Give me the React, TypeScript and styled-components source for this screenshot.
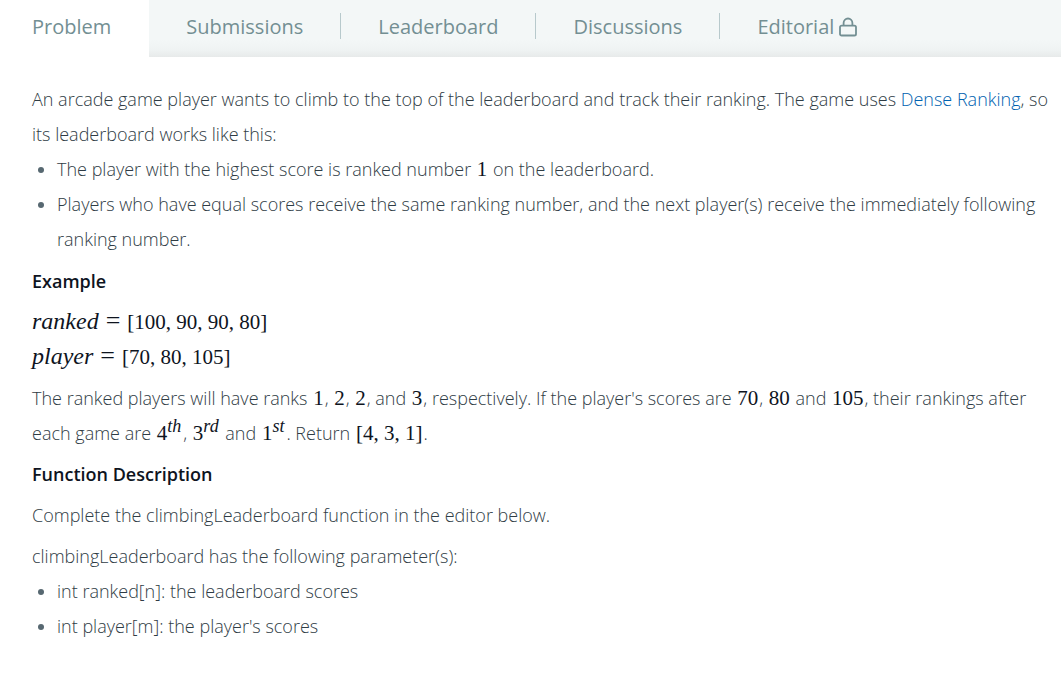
import React from "react";
import styled, { createGlobalStyle } from "styled-components";

const Global = createGlobalStyle`
  * { box-sizing: border-box; }
  body { margin: 0; background: #fff; color: #2f3c45; font-family: "Open Sans", sans-serif; font-size: 18px; font-weight: 300; line-height: 35px; }
`;
const Tabs = styled.nav`
  display: flex;
  height: 57px;
  background: linear-gradient(to bottom, #f3f7f7 40px, #eff3f3 50px, #e7eaea 57px);
`;
const Tab = styled.a<{ $active?: boolean }>`
  display: flex;
  align-items: center;
  gap: 5px;
  padding: 0 37px 4px;
  font-size: 20px;
  font-weight: 400;
  color: #738f93;
  text-decoration: none;
  white-space: nowrap;
  ${(p) => p.$active && "background: #fff; padding-left: 32px; padding-right: 38px;"}
`;
const Divider = styled.span`
  width: 1px;
  height: 26px;
  margin-top: 13px;
  background: #b7c9cc;
`;
const Body = styled.main`
  padding: 25px 8px 24px 32px;
`;
const Paragraph = styled.p<{ $tight?: boolean }>`
  margin: 0 0 ${(p) => (p.$tight ? 0 : 6)}px;
`;
const List = styled.ul`
  margin: 0 0 7px;
  padding-left: 25px;

  li::marker { color: #576871; }
`;
const Heading = styled.h3`
  margin: 0 0 6px;
  font-size: 18px;
  font-weight: 600;
  color: #0e141e;
`;
const Link = styled.a`
  color: #0062b0;
  text-decoration: none;
`;
const Formula = styled.span`
  margin: 0 1px;
  font-family: "Liberation Serif", serif;
  font-size: 21px;
  font-weight: 400;
  line-height: 21px;
  color: #0e141e;
  white-space: nowrap;
`;
const Equation = styled(Formula)`
  display: block;
  margin: 0;
  line-height: 35px;
`;
const Variable = styled.i`
  font-size: 24px;
  line-height: 24px;
`;
const Equals = styled.span`
  margin: 0 7px;
  font-size: 26px;
  line-height: 26px;
`;
const Sup = styled.sup`
  margin-right: 1px;
  font-size: 18px;
  font-style: italic;
  line-height: 0;
`;

function LockIcon() {
  return (
    <svg width="18" height="20" viewBox="0 0 18 20" fill="none" stroke="currentColor" strokeWidth="1.8" aria-hidden="true">
      <rect x="1" y="8.6" width="16" height="9.9" rx="1.6" />
      <path d="M4.6 8.6V5.9a4.4 4.4 0 0 1 8.8 0v2.7" />
    </svg>
  );
}

export default function App() {
  return (
    <>
      <Global />
      <Tabs>
        <Tab href="#problem" $active>Problem</Tab>
        <Tab href="#submissions">Submissions</Tab>
        <Divider />
        <Tab href="#leaderboard">Leaderboard</Tab>
        <Divider />
        <Tab href="#discussions">Discussions</Tab>
        <Divider />
        <Tab href="#editorial">Editorial<LockIcon /></Tab>
      </Tabs>
      <Body>
        <Paragraph $tight>An arcade game player wants to climb to the top of the leaderboard and track their ranking. The game uses <Link href="#dense">Dense Ranking</Link>, so its leaderboard works like this:</Paragraph>
        <List>
          <li>The player with the highest score is ranked number <Formula>1</Formula> on the leaderboard.</li>
          <li>Players who have equal scores receive the same ranking number, and the next player(s) receive the immediately following ranking number.</li>
        </List>
        <Heading>Example</Heading>
        <Paragraph as="div">
          <Equation><Variable>ranked</Variable><Equals>=</Equals>[100, 90, 90, 80]</Equation>
          <Equation><Variable>player</Variable><Equals>=</Equals>[70, 80, 105]</Equation>
        </Paragraph>
        <Paragraph>The ranked players will have ranks <Formula>1</Formula>, <Formula>2</Formula>, <Formula>2</Formula>, and <Formula>3</Formula>, respectively. If the player's scores are <Formula>70</Formula>, <Formula>80</Formula> and <Formula>105</Formula>, their rankings after each game are <Formula>4<Sup>th</Sup></Formula>, <Formula>3<Sup>rd</Sup></Formula> and <Formula>1<Sup>st</Sup></Formula>. Return <Formula>[4, 3, 1]</Formula>.</Paragraph>
        <Heading>Function Description</Heading>
        <Paragraph>Complete the climbingLeaderboard function in the editor below.</Paragraph>
        <Paragraph $tight>climbingLeaderboard has the following parameter(s):</Paragraph>
        <List>
          <li>int ranked[n]: the leaderboard scores</li>
          <li>int player[m]: the player's scores</li>
        </List>
      </Body>
    </>
  );
}
